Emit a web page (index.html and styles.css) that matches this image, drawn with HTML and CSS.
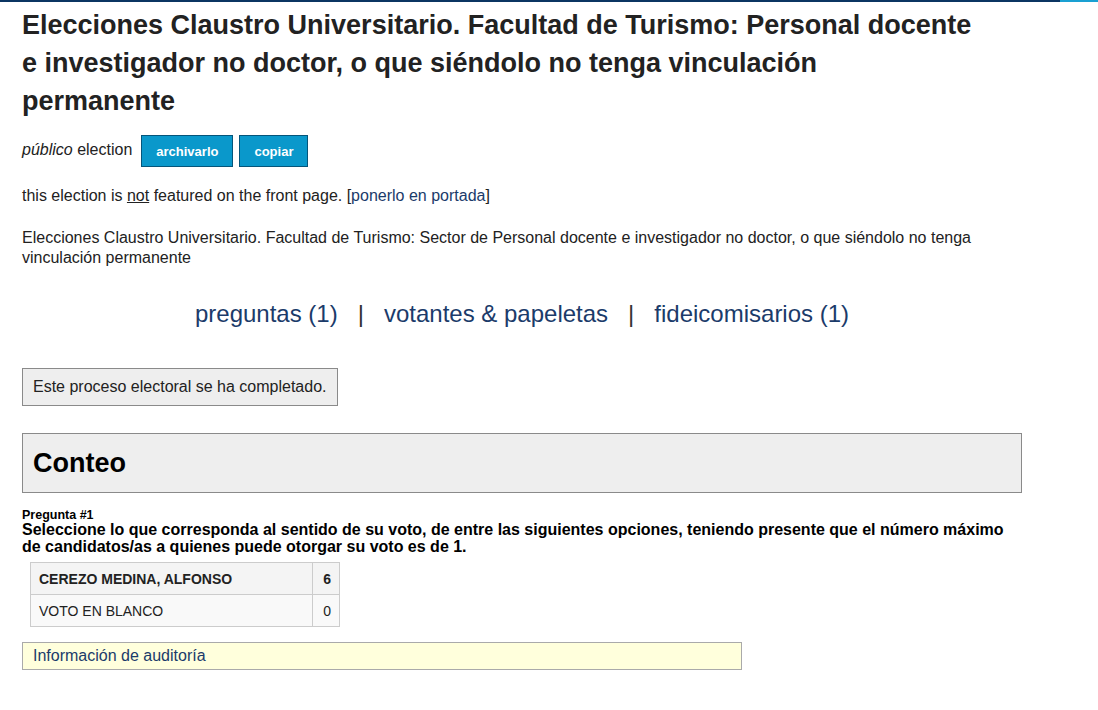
FILE: index.html
```html
<!DOCTYPE html>
<html lang="es">
<head>
<meta charset="utf-8">
<title>Elecciones Claustro Universitario</title>
<link rel="stylesheet" href="styles.css">
</head>
<body>
<div class="topbar"><div class="topbar-dark"></div><div class="topbar-light"></div></div>
<main class="content">
  <h1 class="title">Elecciones Claustro Universitario. Facultad de Turismo: Personal docente e investigador no doctor, o que siéndolo no tenga vinculación permanente</h1>
  <div class="status-row">
    <span><em>público</em> election</span>
    <button class="btn">archivarlo</button>
    <button class="btn">copiar</button>
  </div>
  <p class="featured">this election is <u>not</u> featured on the front page. [<a href="#">ponerlo en portada</a>]</p>
  <p class="desc">Elecciones Claustro Universitario. Facultad de Turismo: Sector de Personal docente e investigador no doctor, o que siéndolo no tenga vinculación permanente</p>
  <nav class="tabs">
    <a href="#">preguntas (1)</a><span class="sep">|</span><a href="#">votantes &amp; papeletas</a><span class="sep">|</span><a href="#">fideicomisarios (1)</a>
  </nav>
  <div class="notice">Este proceso electoral se ha completado.</div>
  <div class="panel"><h2>Conteo</h2></div>
  <div class="question">
    <div class="q-label">Pregunta #1</div>
    <div class="q-text">Seleccione lo que corresponda al sentido de su voto, de entre las siguientes opciones, teniendo presente que el número máximo de candidatos/as a quienes puede otorgar su voto es de 1.</div>
  </div>
  <table class="results">
    <tr class="winner"><td class="name">CEREZO MEDINA, ALFONSO</td><td class="count">6</td></tr>
    <tr><td class="name">VOTO EN BLANCO</td><td class="count">0</td></tr>
  </table>
  <div class="audit"><a href="#">Información de auditoría</a></div>
</main>
</body>
</html>
```

FILE: styles.css
```css
html, body { margin: 0; padding: 0; background: #fff; }
body {
  font-family: "Liberation Sans", Arial, sans-serif;
  color: #222;
}
.topbar { display: flex; height: 2px; }
.topbar-dark { flex: 1; background: #0b3562; }
.topbar-light { width: 38px; background: #1aa0d2; }
.content { width: 1000px; padding: 0 22px; }
.title {
  font-size: 27px;
  line-height: 38px;
  font-weight: bold;
  margin: 4px 0 0 0;
  width: 951px;
  color: #222;
}
.status-row {
  display: flex;
  align-items: center;
  gap: 6px;
  margin-top: 15px;
  font-size: 16px;
}
.status-row span { margin-right: 3px; margin-top: -2px; }
.btn {
  font-family: "Liberation Sans", Arial, sans-serif;
  font-size: 13px;
  font-weight: bold;
  color: #fff;
  background: #0a98cb;
  border: 1px solid #05557a;
  height: 32px;
  padding: 0 14px;
  cursor: pointer;
}
.featured { font-size: 16px; margin: 19px 0 0 0; line-height: 20px; }
a { color: #1b3b6a; text-decoration: none; }
.desc { font-size: 16px; line-height: 20px; margin: 22px 0 0 0; }
.tabs {
  text-align: center;
  font-size: 24px;
  margin-top: 32px;
  line-height: 28px;
}
.tabs .sep { margin: 0 20px; color: #333; }
.notice {
  display: inline-block;
  margin-top: 40px;
  border: 1px solid #8a8a8a;
  background: #eee;
  font-size: 16px;
  padding: 9px 10px 9px 10px;
}
.panel {
  margin-top: 27px;
  border: 1px solid #8a8a8a;
  background: #eee;
  height: 58px;
  display: flex;
  align-items: center;
  padding: 0 10px;
}
.panel h2 { margin: 0; font-size: 27px; font-weight: bold; color: #000; }
.question { margin-top: 15px; color: #000; }
.q-label { font-size: 12.5px; font-weight: bold; line-height: 14px; }
.q-text { font-size: 16px; font-weight: bold; line-height: 17px; margin-top: -1px; }
.results {
  border-collapse: collapse;
  margin: 7px 0 0 8px;
  font-size: 14px;
}
.results td {
  border: 1px solid #ccc;
  height: 31px;
  padding: 0 8px;
  background: #f9f9f9;
}
.results .name { width: 265px; }
.results .count { width: 10px; text-align: right; }
.results .winner td { font-weight: bold; background: #f4f4f4; }
.audit {
  margin-top: 15px;
  width: 698px;
  border: 1px solid #aaa;
  background: #ffffdc;
  font-size: 16px;
  padding: 4px 10px 4px 10px;
  line-height: 18px;
}
```
